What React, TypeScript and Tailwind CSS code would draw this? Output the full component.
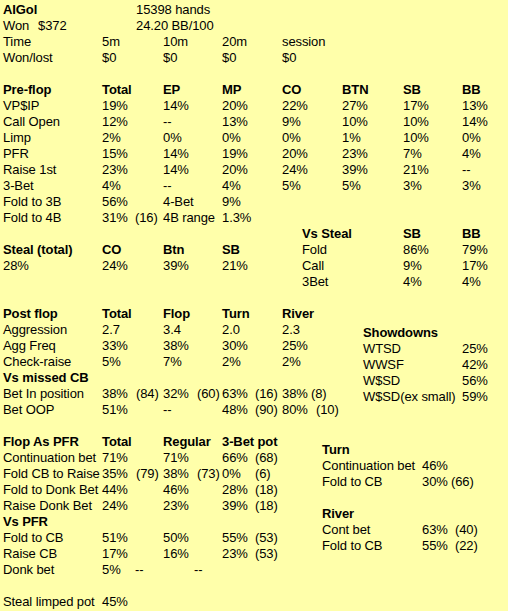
import clsx from "clsx";

type Cell = string | { v: string; p?: string; w?: string };

const MAIN = "grid-cols-[99px_61px_59px_60px_60px_61px_59px_1fr]";
const STEAL = "grid-cols-[101px_59px_1fr]";
const SHOW = "grid-cols-[99px_1fr]";
const SIDE = "grid-cols-[100px_1fr]";

function C({ c }: { c?: Cell }) {
  if (c === undefined) return <span />;
  if (typeof c === "string") return <span className="whitespace-nowrap">{c}</span>;
  return (
    <span className="flex whitespace-nowrap">
      <span className={clsx("shrink-0", c.w ?? "w-[34px]")}>{c.v}</span>
      <span>{c.p}</span>
    </span>
  );
}

function Row({ cols, cells, bold }: { cols: string; cells: Cell[]; bold?: boolean }) {
  return (
    <div className={clsx("grid h-4", cols, bold && "font-bold")}>
      {cells.map((c, i) => (
        <C key={i} c={c} />
      ))}
    </div>
  );
}

const Gap = () => <div className="h-4" />;

const preflop: Cell[][] = [
  ["VP$IP", "19%", "14%", "20%", "22%", "27%", "17%", "13%"],
  ["Call Open", "12%", "--", "13%", "9%", "10%", "10%", "14%"],
  ["Limp", "2%", "0%", "0%", "0%", "1%", "10%", "0%"],
  ["PFR", "15%", "14%", "19%", "20%", "23%", "7%", "4%"],
  ["Raise 1st", "23%", "14%", "20%", "24%", "39%", "21%", "--"],
  ["3-Bet", "4%", "--", "4%", "5%", "5%", "3%", "3%"],
  ["Fold to 3B", "56%", "4-Bet", "9%"],
  ["Fold to 4B", { v: "31%", p: "(16)", w: "w-[33px]" }, "4B range", "1.3%"],
];

const postflop: Cell[][] = [
  ["Aggression", "2.7", "3.4", "2.0", "2.3"],
  ["Agg Freq", "33%", "38%", "30%", "25%"],
  ["Check-raise", "5%", "7%", "2%", "2%"],
];

const showdowns: Cell[][] = [
  ["WTSD", "25%"],
  ["WWSF", "42%"],
  ["W$SD", "56%"],
  ["W$SD(ex small)", "59%"],
];

const asPfr: Cell[][] = [
  ["Continuation bet", "71%", "71%", { v: "66%", p: "(68)", w: "w-[33px]" }],
  ["Fold CB to Raise", { v: "35%", p: "(79)" }, { v: "38%", p: "(73)", w: "w-[34px]" }, { v: "0%", p: "(6)", w: "w-[33px]" }],
  ["Fold to Donk Bet", "44%", "46%", { v: "28%", p: "(18)", w: "w-[33px]" }],
  ["Raise Donk Bet", "24%", "23%", { v: "39%", p: "(18)", w: "w-[33px]" }],
];

const vsPfr: Cell[][] = [
  ["Fold to CB", "51%", "50%", { v: "55%", p: "(53)", w: "w-[33px]" }],
  ["Raise CB", "17%", "16%", { v: "23%", p: "(53)", w: "w-[33px]" }],
  ["Donk bet", { v: "5%", p: "--", w: "w-[33px]" }, { v: "", p: "--", w: "w-[31px]" }],
];

export default function App() {
  return (
    <div className="h-[611px] w-[508px] overflow-hidden bg-[#ffffaa] pl-[3px] pt-[2px] font-['Liberation_Sans',Arial,sans-serif] text-[13px] leading-4 tracking-[-0.1px] text-black">
      <div className="grid h-4 grid-cols-[133px_1fr]">
        <span className="font-bold">AIGol</span>
        <span>15398 hands</span>
      </div>
      <div className="grid h-4 grid-cols-[133px_1fr]">
        <span className="flex">
          <span className="w-[35px]">Won</span>
          <span>$372</span>
        </span>
        <span>24.20 BB/100</span>
      </div>
      <Row cols={MAIN} cells={["Time", "5m", "10m", "20m", "session"]} />
      <Row cols={MAIN} cells={["Won/lost", "$0", "$0", "$0", "$0"]} />
      <Gap />
      <Row cols={MAIN} bold cells={["Pre-flop", "Total", "EP", "MP", "CO", "BTN", "SB", "BB"]} />
      {preflop.map((r, i) => (
        <Row key={i} cols={MAIN} cells={r} />
      ))}

      <div className="flex">
        <div className="w-[299px]">
          <Gap />
          <Row cols={MAIN} bold cells={["Steal (total)", "CO", "Btn", "SB"]} />
          <Row cols={MAIN} cells={["28%", "24%", "39%", "21%"]} />
          <Gap />
        </div>
        <div className="flex-1">
          <Row cols={STEAL} bold cells={["Vs Steal", "SB", "BB"]} />
          <Row cols={STEAL} cells={["Fold", "86%", "79%"]} />
          <Row cols={STEAL} cells={["Call", "9%", "17%"]} />
          <Row cols={STEAL} cells={["3Bet", "4%", "4%"]} />
        </div>
      </div>

      <div className="flex">
        <div className="w-[360px]">
          <Gap />
          <Row cols={MAIN} bold cells={["Post flop", "Total", "Flop", "Turn", "River"]} />
          {postflop.map((r, i) => (
            <Row key={i} cols={MAIN} cells={r} />
          ))}
          <Row cols={MAIN} bold cells={["Vs missed CB"]} />
          <Row
            cols={MAIN}
            cells={[
              "Bet In position",
              { v: "38%", p: "(84)" },
              { v: "32%", p: "(60)", w: "w-[34px]" },
              { v: "63%", p: "(16)", w: "w-[33px]" },
              { v: "38%", p: "(8)", w: "w-[29px]" },
            ]}
          />
          <Row
            cols={MAIN}
            cells={["Bet OOP", "51%", "--", { v: "48%", p: "(90)", w: "w-[33px]" }, { v: "80%", p: "(10)" }]}
          />
        </div>
        <div className="flex-1 pt-[35px]">
          <Row cols={SHOW} bold cells={["Showdowns"]} />
          {showdowns.map((r, i) => (
            <Row key={i} cols={SHOW} cells={r} />
          ))}
        </div>
      </div>

      <div className="flex">
        <div className="w-[319px]">
          <Gap />
          <Row cols={MAIN} bold cells={["Flop As PFR", "Total", "Regular", "3-Bet pot"]} />
          {asPfr.map((r, i) => (
            <Row key={i} cols={MAIN} cells={r} />
          ))}
          <Row cols={MAIN} bold cells={["Vs PFR"]} />
          {vsPfr.map((r, i) => (
            <Row key={i} cols={MAIN} cells={r} />
          ))}
          <Gap />
          <Row cols={MAIN} cells={["Steal limped pot", "45%"]} />
        </div>
        <div className="flex-1 pt-6">
          <Row cols={SIDE} bold cells={["Turn"]} />
          <Row cols={SIDE} cells={["Continuation bet", "46%"]} />
          <Row cols={SIDE} cells={["Fold to CB", { v: "30%", p: "(66)", w: "w-[29px]" }]} />
          <Gap />
          <Row cols={SIDE} bold cells={["River"]} />
          <Row cols={SIDE} cells={["Cont bet", { v: "63%", p: "(40)", w: "w-[33px]" }]} />
          <Row cols={SIDE} cells={["Fold to CB", { v: "55%", p: "(22)", w: "w-[33px]" }]} />
        </div>
      </div>
    </div>
  );
}
